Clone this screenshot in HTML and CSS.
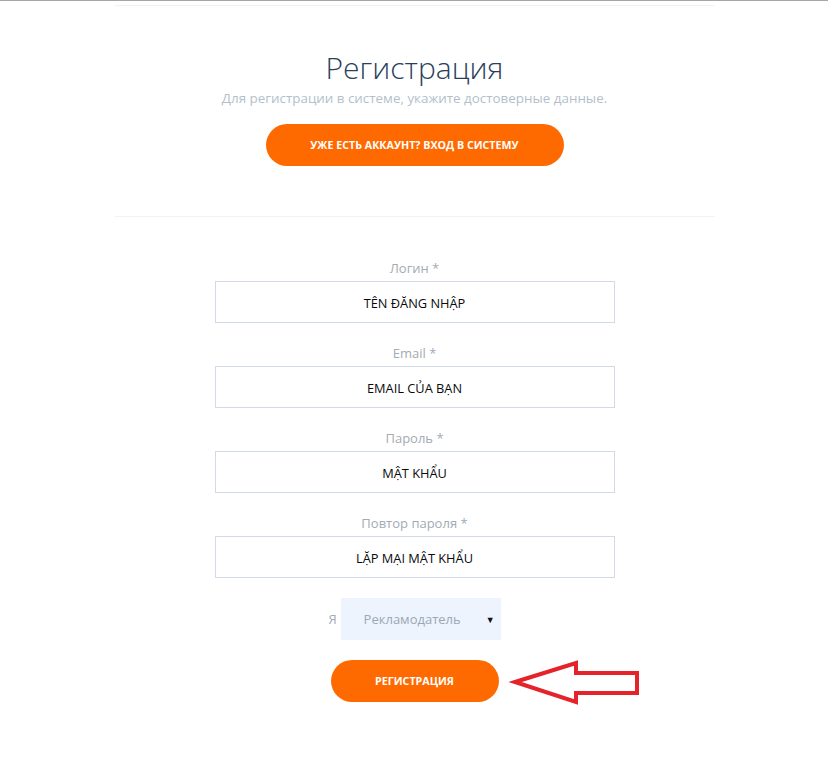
FILE: index.html
```html
<!DOCTYPE html>
<html lang="ru">
<head>
<meta charset="utf-8">
<title>Регистрация</title>
<link rel="stylesheet" href="styles.css">
</head>
<body>
<div class="topbar"></div>
<main class="wrap">
  <h1 class="title">Регистрация</h1>
  <p class="subtitle">Для регистрации в системе, укажите достоверные данные.</p>
  <div class="center"><a class="btn btn-login" href="#">Уже есть аккаунт? Вход в систему</a></div>
  <hr class="divider">
  <form class="form">
    <label class="field">
      <span class="label">Логин *</span>
      <input class="input" type="text" value="TÊN ĐĂNG NHẬP">
    </label>
    <label class="field">
      <span class="label">Email *</span>
      <input class="input" type="text" value="EMAIL CỦA BẠN">
    </label>
    <label class="field">
      <span class="label">Пароль *</span>
      <input class="input" type="text" value="MẬT KHẨU">
    </label>
    <label class="field">
      <span class="label">Повтор пароля *</span>
      <input class="input" type="text" value="LẶP MẠI MẬT KHẨU">
    </label>
    <div class="role">
      <span class="role-label">Я</span>
      <div class="select"><span class="select-text">Рекламодатель</span><span class="select-arrow">▼</span></div>
    </div>
    <div class="center"><button class="btn btn-submit" type="button">Регистрация</button></div>
  </form>
</main>
<svg class="arrow" width="134" height="50" viewBox="0 0 134 50">
  <polygon points="7,25 68,6 68,16 129,16 129,36 68,36 68,45" fill="none" stroke="#e5232b" stroke-width="4" stroke-linejoin="miter"/>
</svg>
</body>
</html>
```

FILE: styles.css
```css
html, body {
  margin: 0;
  padding: 0;
  background: #ffffff;
}
body {
  font-family: "Open Sans", "Liberation Sans", sans-serif;
  position: relative;
  min-height: 757px;
  padding-left: 1px;
}
.topbar {
  height: 1px;
  background: #a6a6a6;
  margin-left: -1px;
}
.wrap {
  width: 600px;
  margin: 4px auto 0;
  border-top: 1px solid #eef3f9;
  padding-top: 42px;
  box-sizing: border-box;
}
.title {
  margin: 0;
  font-size: 30px;
  font-weight: 300;
  line-height: 40px;
  color: #2b3f5c;
  text-align: center;
}
.subtitle {
  margin: 0;
  font-size: 13.4px;
  line-height: 20px;
  color: #b3bfcb;
  text-align: center;
}
.center {
  display: flex;
  justify-content: center;
}
.btn {
  display: flex;
  align-items: center;
  justify-content: center;
  height: 42px;
  border-radius: 21px;
  background: #ff6a00;
  color: #ffffff;
  font-family: "Open Sans", "Liberation Sans", sans-serif;
  font-weight: 700;
  font-size: 10.7px;
  text-transform: uppercase;
  text-decoration: none;
  border: none;
  box-sizing: border-box;
}
.btn-login {
  width: 298px;
  margin-top: 16px;
}
.divider {
  margin: 50px 0 0;
  border: none;
  border-top: 1px solid #eef4fb;
  height: 0;
}
.form {
  width: 400px;
  margin: 41px auto 0;
  display: flex;
  flex-direction: column;
  gap: 20px;
}
.field {
  display: flex;
  flex-direction: column;
  align-items: center;
  gap: 3px;
}
.label {
  font-size: 13px;
  line-height: 20px;
  color: #a3abb3;
}
.input {
  width: 400px;
  height: 42px;
  box-sizing: border-box;
  border: 1px solid #d2dbe5;
  background: #ffffff;
  text-align: center;
  font-family: "Open Sans", "Liberation Sans", sans-serif;
  font-size: 12.8px;
  color: #0a0a0a;
  padding: 2px 10px 0;
  outline: none;
}
.role {
  display: flex;
  justify-content: center;
  align-items: center;
  gap: 4px;
}
.role-label {
  font-size: 13px;
  color: #a3abb3;
}
.select {
  width: 160px;
  height: 42px;
  background: #edf4fd;
  display: flex;
  align-items: center;
  justify-content: space-between;
  padding: 0 6px 0 23px;
  box-sizing: border-box;
}
.select-text {
  font-size: 13px;
  color: #9aa8b6;
}
.select-arrow {
  font-size: 9px;
  color: #111111;
}
.btn-submit {
  width: 168px;
}
.arrow {
  position: absolute;
  left: 508px;
  top: 657px;
}
```
